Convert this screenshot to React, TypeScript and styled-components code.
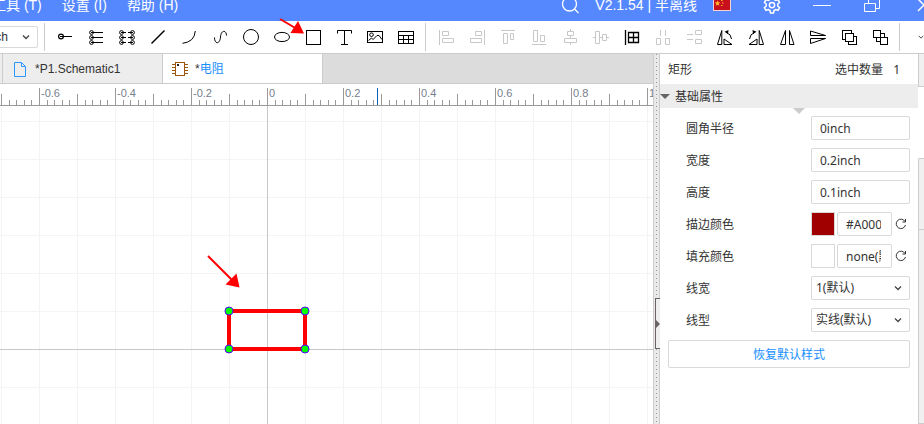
import React from "react";
import styled, { createGlobalStyle, css } from "styled-components";

const GlobalStyle = createGlobalStyle`
  *, *::before, *::after { box-sizing: border-box; }
  body {
    margin: 0;
    background: #fff;
    color: #333;
    font: 12px/16px "Liberation Sans", "Noto Sans CJK SC", sans-serif;
  }
  button, input, select { font: inherit; color: inherit; margin: 0; }
`;

const Page = styled.div`
  position: relative;
  display: flex;
  flex-direction: column;
  height: 100vh;
  overflow: hidden;
`;

/* ---------- title bar ---------- */
const TitleBar = styled.header`
  display: flex;
  align-items: flex-end;
  flex: none;
  height: 21px;
  overflow: hidden;
  background: #5588ff;
  color: #fff;
  font-size: 14px;
`;
const TitleGroup = styled.div<{ $gap: number; $push?: boolean }>`
  display: flex;
  align-items: center;
  gap: ${(p) => p.$gap}px;
  height: 32px;
  white-space: nowrap;
  ${(p) => p.$push && css`margin-left: auto; margin-right: -11px;`}
`;
const MenuNav = styled(TitleGroup).attrs({ as: "nav" })`
  margin-left: -8px;
`;
const MenuButton = styled.button`
  border: 0;
  padding: 0;
  background: none;
`;
const WindowButton = styled.button<{ $w: number }>`
  display: flex;
  justify-content: center;
  width: ${(p) => p.$w}px;
  border: 0;
  padding: 0;
  background: none;
`;

/* ---------- toolbar ---------- */
const Toolbar = styled.div`
  display: flex;
  align-items: center;
  flex: none;
  height: 33px;
  border-bottom: 1px solid #ccc;
  background: #fff;
  overflow: hidden;
`;
const Separator = styled.span<{ $before: number; $after: number }>`
  flex: none;
  width: 1px;
  height: 28px;
  margin: 0 ${(p) => p.$after}px 0 ${(p) => p.$before}px;
  background: #ccc;
`;
const ToolButton = styled.button`
  flex: none;
  display: flex;
  width: 31px;
  height: 24px;
  border: 0;
  padding: 0;
  background: none;
  color: #000;
  &:disabled { color: #c8c8c8; }
`;
const SelectBox = styled.span<{ $w: number; $h: number; $shift?: number }>`
  position: relative;
  display: flex;
  flex: none;
  width: ${(p) => p.$w}px;
  height: ${(p) => p.$h}px;
  margin-left: ${(p) => p.$shift ?? 0}px;
  svg {
    position: absolute;
    right: 8px;
    top: 50%;
    margin-top: -4px;
    pointer-events: none;
  }
`;
const Select = styled.select<{ $pad: number }>`
  appearance: none;
  width: 100%;
  border: 1px solid #d9d9d9;
  border-radius: 2px;
  padding: 0 20px 0 ${(p) => p.$pad}px;
  background: #fff;
`;

/* ---------- workspace ---------- */
const Workspace = styled.div`
  display: flex;
  flex: 1;
  min-height: 0;
`;
const Editor = styled.main`
  display: flex;
  flex-direction: column;
  flex: 1;
  min-width: 0;
  border-right: 1px solid #ccc;
`;
const Tabs = styled.div`
  display: flex;
  flex: none;
  height: 30px;
  border-bottom: 1px solid #ccc;
  background: #dcdcdc;
`;
const TabEdge = styled.span`
  width: 3px;
  border-right: 1px solid #ccc;
  background: #ededed;
`;
const Tab = styled.button<{ $active?: boolean }>`
  display: flex;
  align-items: center;
  gap: 6px;
  width: 160px;
  border: 0;
  border-right: 1px solid #ccc;
  padding: 0 0 0 8px;
  background: ${(p) => (p.$active ? "#fff" : "#ededed")};
  white-space: nowrap;
`;
const TabName = styled.span<{ $accent?: boolean }>`
  color: ${(p) => (p.$accent ? "#1890ff" : "inherit")};
`;
const Ruler = styled.svg`
  display: block;
  flex: none;
  width: 100%;
  height: 22px;
  font: 11px "Liberation Sans", sans-serif;
`;
const Canvas = styled.svg`
  display: block;
  flex: 1;
  width: 100%;
  min-height: 0;
`;

const Splitter = styled.div`
  display: flex;
  flex-direction: column;
  align-items: center;
  flex: none;
  width: 6px;
  border-right: 1px solid #ccc;
  background: #e9e9e9;
`;
const Grip = styled.span<{ $grow: number }>`
  flex: ${(p) => p.$grow};
  width: 1px;
  background: repeating-linear-gradient(#999 0 1px, #e9e9e9 1px 4px);
`;
const CollapseButton = styled.button`
  display: flex;
  align-items: center;
  align-self: stretch;
  height: 51px;
  margin-left: 1px;
  margin-right: -1px;
  border: 1px solid #6b6363;
  border-right: 0;
  padding: 0;
  background: #eee;
`;

/* ---------- properties panel ---------- */
const Panel = styled.aside`
  flex: none;
  width: 258px;
  font-family: "Noto Sans", "Noto Sans CJK SC", sans-serif;
`;
const PanelHeader = styled.div`
  display: flex;
  align-items: center;
  gap: 10px;
  height: 30px;
  padding: 2px 18px 0 8px;
`;
const PanelTitle = styled.span`
  flex: 1;
`;
const SectionTitle = styled.button`
  display: flex;
  align-items: center;
  gap: 5px;
  width: 100%;
  height: 24px;
  border: 0;
  padding: 1px 0 0;
  background: #ededed;
`;
const Properties = styled.div`
  position: relative;
  padding: 4px 8px 0 26px;
  > svg {
    position: absolute;
    top: 0;
    right: 113px;
  }
`;
const Property = styled.div`
  display: flex;
  align-items: center;
  height: 32px;
`;
const Label = styled.label`
  flex: 1;
  padding-top: 2px;
`;
const Field = styled.div`
  display: flex;
  align-items: center;
  gap: 2px;
  width: 99px;
  height: 24px;
`;
const TextInput = styled.input`
  flex: 1;
  min-width: 0;
  height: 24px;
  border: 1px solid #d9d9d9;
  border-radius: 2px;
  padding: 0 10px 0 8px;
  background: #fff;
`;
const Swatch = styled.button<{ $color: string }>`
  flex: none;
  width: 24px;
  height: 24px;
  border: 1px solid #d9d9d9;
  padding: 0;
  background: ${(p) => p.$color};
`;
const ResetButton = styled.button`
  flex: none;
  display: flex;
  justify-content: center;
  width: 16px;
  border: 0;
  padding: 0 2px 0 0;
  background: none;
`;
const RestoreButton = styled.button`
  display: block;
  width: calc(100% - 16px);
  height: 28px;
  margin: 4px 8px;
  border: 1px solid #d9d9d9;
  border-radius: 2px;
  padding: 2px 0 0;
  background: #fff;
  color: #1890ff;
`;
const SideTabs = styled.div`
  flex: none;
  display: flex;
  flex-direction: column;
  width: 6px;
`;
const SideTab = styled.button<{ $h?: number; $active?: boolean }>`
  flex: ${(p) => (p.$h ? "none" : "1")};
  height: ${(p) => (p.$h ? `${p.$h}px` : "auto")};
  border: 0;
  border-left: 1px solid ${(p) => (p.$active ? "#fff" : "#ccc")};
  border-bottom: 1px solid #ccc;
  padding: 0;
  background: ${(p) => (p.$active ? "#fff" : "#f0f0f0")};
`;
const Pointer = styled.svg`
  position: absolute;
  left: 278px;
  top: 16px;
  pointer-events: none;
`;

/* ---------- icons ---------- */
const Chevron = () => (
  <svg width="8" height="8" viewBox="0 0 8 8" fill="none" stroke="#444" strokeWidth="1.3">
    <path d="M1 2.5l3 3 3-3" />
  </svg>
);

type Tool = { name: string; off?: boolean; icon: React.ReactNode };

const drawTools: Tool[] = [
  { name: "Pin", icon: <><circle cx="11" cy="11.5" r="2.4" strokeWidth="1.2" /><path d="M10 11.5H22" /></> },
  {
    name: "Pin group",
    icon: (
      <>
        {[7.5, 12.5, 17.5].map((y) => <circle key={y} cx="10.5" cy={y} r="1.9" />)}
        <path d="M10 7.5H22M10 12.5H22M10 17.5H22" />
      </>
    ),
  },
  {
    name: "Pin array",
    icon: (
      <>
        {[7.5, 12.5, 17.5].map((y) => (
          <g key={y}>
            <circle cx="9.5" cy={y} r="1.9" />
            <circle cx="20.5" cy={y} r="1.9" />
          </g>
        ))}
        <path d="M9 7.5h5M16 7.5h5M9 12.5h5M16 12.5h5M9 17.5h5M16 17.5h5" />
      </>
    ),
  },
  { name: "Line", icon: <path d="M8.5 18.5L21.5 5.5" strokeWidth="1.5" /> },
  { name: "Arc", icon: <path d="M8.5 18.3Q20.5 17 21.3 6" /> },
  { name: "Bezier", icon: <path d="M9.5 12.5C9.5 19.5 15 19.5 15.5 12C16 4.5 21.5 5 21.5 10.5" /> },
  { name: "Circle", icon: <circle cx="15" cy="12" r="7.5" /> },
  { name: "Ellipse", icon: <ellipse cx="15" cy="12" rx="7.5" ry="4.6" /> },
  { name: "Rectangle", icon: <rect x="8.5" y="5.5" width="14" height="14" /> },
  { name: "Text", icon: <path d="M8.5 8.5V5.5H22.5V8.5M15.5 5.5V19M12 19.5h7" /> },
  {
    name: "Image",
    icon: (
      <>
        <rect x="7.5" y="6.5" width="15" height="11" />
        <circle cx="11.5" cy="9.7" r="1.8" />
        <path d="M8.5 15.5l3-2.500 1.500 1.500 4-4 2 0 3 4" />
      </>
    ),
  },
  {
    name: "Table",
    icon: (
      <>
        <rect x="7.5" y="6.5" width="15" height="12" />
        <path d="M7.5 10.5h15M7.5 14.5h15M12.5 10v8.5M17.5 10v8.5" />
      </>
    ),
  },
];

const rotateLeft = (
  <>
    <path d="M7.5 19.5L11.8 5.5V19.5Z" />
    <path d="M14 19.5V14L22 19.5Z" />
    <path d="M21.5 14Q21 9 16.5 7.5" />
    <path d="M14.5 6.8L18.5 5L18 9Z" fill="currentColor" stroke="none" />
  </>
);

const arrangeTools: Tool[] = [
  { name: "Align left", off: true, icon: <path d="M8.5 5v15M11.5 6.5h6v4h-6zM11.5 13.5h11v4h-11z" /> },
  { name: "Align right", off: true, icon: <path d="M22.5 5v15M13.5 6.5h6v4h-6zM8.5 13.5h11v4h-11z" /> },
  { name: "Align top", off: true, icon: <path d="M8 5.5h14M10.5 8.5h4v10h-4zM17.5 8.5h3v6h-3z" /> },
  { name: "Align bottom", off: true, icon: <path d="M8 19.5h14M9.5 5.5h4v11h-4zM16.5 10.5h4v6h-4z" /> },
  { name: "Center horizontally", off: true, icon: <path d="M15.5 4v2.5M12.5 6.5h6v4h-6zM15.5 10.5v3M9.5 13.5h12v4h-12zM15.5 17.5v2.5" /> },
  { name: "Center vertically", off: true, icon: <path d="M7 12.5h2.5M9.5 6.5h4v12h-4zM13.5 12.5h3M16.5 9.5h4v6h-4zM20.5 12.5h2.5" /> },
  {
    name: "Snap to grid",
    icon: <path d="M8.5 5v15M11.5 7.5h10v10h-10zM11.5 12.5h10M16.5 7.5v10" strokeWidth="1.3" />,
  },
  { name: "Distribute horizontally", off: true, icon: <path d="M12.5 5v6M17.5 5v6M8.5 13.5h4v6h-4zM17.5 13.5h4v6h-4z" /> },
  { name: "Distribute vertically", off: true, icon: <path d="M8 9.5h6M8 14.5h6M16.5 5.5h6v4h-6zM16.5 14.5h6v4h-6z" /> },
  { name: "Rotate left", icon: rotateLeft },
  { name: "Rotate right", icon: <g transform="translate(30 0) scale(-1 1)">{rotateLeft}</g> },
  { name: "Flip horizontally", icon: <path d="M8.5 19.5L13.5 5.5V19.5ZM22 19.5L17.5 5.5V19.5Z" /> },
  { name: "Flip vertically", icon: <path d="M7.5 6L22.5 10.5H7.5ZM7.5 18.5L22.5 13.5H7.5Z" /> },
  {
    name: "Bring to front",
    icon: (
      <g fill="#fff">
        <rect x="8.5" y="5.5" width="9" height="9" />
        <rect x="14.5" y="11.5" width="8" height="8" />
        <rect x="11.5" y="8.5" width="8" height="8" />
      </g>
    ),
  },
  {
    name: "Send to back",
    icon: (
      <g fill="#fff">
        <rect x="11.5" y="8.5" width="8" height="8" />
        <rect x="8.5" y="5.5" width="7" height="7" />
        <rect x="15.5" y="12.5" width="7" height="7" />
      </g>
    ),
  },
];

const ToolGroup = ({ tools }: { tools: Tool[] }) => (
  <>
    {tools.map((t) => (
      <ToolButton key={t.name} aria-label={t.name} disabled={t.off}>
        <svg width="31" height="24" viewBox="0 0 31 24" fill="none" stroke="currentColor">
          {t.icon}
        </svg>
      </ToolButton>
    ))}
  </>
);

const ResetIcon = () => (
  <svg width="12" height="12" viewBox="0 0 12 12" fill="none" stroke="#333">
    <path d="M10 3.5A4.7 4.7 0 1 0 10.5 7M10.5 1v3h-3" />
  </svg>
);

/* ---------- drawing area ---------- */
const ORIGIN_X = 267;
const UNIT = 38;
const ORIGIN_Y = 243;
const ticks = Array.from({ length: 86 }, (_, i) => i - 35);
const columns = Array.from({ length: 60 }, (_, i) => i - 7).filter((i) => i !== 0);
const rows = Array.from({ length: 30 }, (_, i) => i - 6).filter((i) => i !== 0);
const corners = [[229, 205], [305, 205], [229, 243], [305, 243]];

const RulerScale = () => (
  <Ruler>
    <g stroke="#999" shapeRendering="crispEdges">
      {ticks.map((i) => {
        const x = Math.round(ORIGIN_X + (i * UNIT) / 5) + 0.5;
        const top = i % 10 === 0 ? 4 : i % 5 === 0 ? 10 : 16;
        return <line key={i} x1={x} x2={x} y1={top} y2={21} />;
      })}
      <line x1="0" x2="100%" y1="21.5" y2="21.5" />
    </g>
    <line x1="377.5" x2="377.5" y1="4" y2="21" stroke="#0b62b8" />
    <g fill="#76808c">
      {[-3, -2, -1, 0, 1, 2, 3, 4, 5].map((i) => (
        <text key={i} x={ORIGIN_X + 2 + i * UNIT * 2} y="13">
          {i === 0 ? "0" : i === 5 ? "1" : (i * 0.2).toFixed(1)}
        </text>
      ))}
    </g>
  </Ruler>
);

const Drawing = () => (
  <Canvas>
    <g stroke="#f4f4f4" shapeRendering="crispEdges">
      {columns.map((i) => {
        const x = ORIGIN_X + i * UNIT + 0.5;
        return <line key={i} x1={x} x2={x} y1="0" y2="100%" />;
      })}
      {rows.map((i) => {
        const y = ORIGIN_Y + i * UNIT + 0.5;
        return <line key={i} x1="0" x2="100%" y1={y} y2={y} />;
      })}
    </g>
    <g stroke="#c8c8c8" shapeRendering="crispEdges">
      <line x1="267.5" x2="267.5" y1="0" y2="100%" />
      <line x1="0" x2="100%" y1="243.5" y2="243.5" />
    </g>
    <rect x="229" y="205" width="76" height="38" fill="none" stroke="#f00" strokeWidth="4" />
    {corners.map(([x, y]) => (
      <circle key={`${x}-${y}`} cx={x} cy={y} r="4" fill="#0f0" stroke="#50f" />
    ))}
    <path d="M208 150L233 175" stroke="#f00" strokeWidth="2" />
    <path d="M239.5 181.5L225.5 178.5L236.5 167.5Z" fill="#f00" />
  </Canvas>
);

export default function App() {
  return (
    <Page>
      <GlobalStyle />
      <TitleBar>
        <MenuNav $gap={20}>
          <MenuButton>工具 (T)</MenuButton>
          <MenuButton>设置 (I)</MenuButton>
          <MenuButton>帮助 (H)</MenuButton>
        </MenuNav>
        <TitleGroup $gap={16} $push>
          <WindowButton $w={18} aria-label="Search">
            <svg width="18" height="18" viewBox="0 0 18 18" fill="none" stroke="#fff" strokeWidth="1.3">
              <circle cx="8.5" cy="8" r="7" />
              <path d="M13.5 13l4 4" />
            </svg>
          </WindowButton>
          <span>V2.1.54 | 半离线</span>
          <WindowButton $w={18} aria-label="Language">
            <svg width="18" height="12" viewBox="0 0 18 12">
              <rect x="0.5" y="0.5" width="17" height="11" fill="#c8101c" stroke="#f3d3d8" />
              <path d="M4.5 1.5l.8 1.8 2 .2-1.5 1.3.5 2-1.800-1-1.800 1 .5-2L1.700 3.500l2-.2z" fill="#ffb42a" />
              <path d="M8 1h1.500v1H8zM9 3.500h1.500v1H9zM8 6h1.500v1H8z" fill="#ffb42a" />
            </svg>
          </WindowButton>
          <WindowButton $w={50} aria-label="Settings">
            <svg width="18" height="18" viewBox="0 0 24 24" fill="none" stroke="#fff" strokeWidth="2">
              <path d="M10 1.5h4l.7 3.2 2.3 1.3 3.1-1 2 3.5L19.700 10.700v2.600l2.400 2.200-2 3.500-3.100-1-2.300 1.300L14 22.500h-4l-.7-3.200L7 18l-3.100 1-2-3.500 2.400-2.200v-2.600L1.900 8.500l2-3.500L7 6l2.300-1.300z" />
              <circle cx="12" cy="12" r="3.5" />
            </svg>
          </WindowButton>
          <WindowButton $w={18} aria-label="Minimize">
            <svg width="18" height="12" viewBox="0 0 18 12" stroke="#fff">
              <path d="M0 6.5h18" />
            </svg>
          </WindowButton>
          <WindowButton $w={50} aria-label="Restore">
            <svg width="16" height="16" viewBox="0 0 16 16" fill="none" stroke="#fff">
              <path d="M.5 6.500h11v8H.5zM4.500 6.500v-4h11v9h-4" />
            </svg>
          </WindowButton>
          <WindowButton $w={22} aria-label="Close">
            <svg width="14" height="14" viewBox="0 0 14 14" stroke="#fff" strokeWidth="1.5">
              <path d="M1 1l12 12M13 1L1 13" />
            </svg>
          </WindowButton>
        </TitleGroup>
      </TitleBar>

      <Toolbar>
        <SelectBox $w={68} $h={22} $shift={-30}>
          <Select $pad={15} aria-label="Unit" defaultValue="inch">
            <option>inch</option>
            <option>mm</option>
          </Select>
          <Chevron />
        </SelectBox>
        <Separator $before={6} $after={5} />
        <ToolGroup tools={drawTools} />
        <Separator $before={3} $after={5} />
        <ToolGroup tools={arrangeTools} />
        <Separator $before={3} $after={18} />
        <Chevron />
      </Toolbar>

      <Workspace>
        <Editor>
          <Tabs role="tablist">
            <TabEdge />
            <Tab role="tab">
              <svg width="18" height="18" viewBox="0 0 18 18" fill="none" stroke="#2e96ff">
                <path d="M3.5 2.5h7l4 4v10h-11zM10.5 2.5v4h4" />
              </svg>
              <TabName>*P1.Schematic1</TabName>
            </Tab>
            <Tab $active role="tab" aria-selected>
              <svg width="18" height="18" viewBox="0 0 18 18" fill="none" stroke="#a0560b">
                <rect x="4.5" y="2.5" width="9" height="13" />
                <path d="M1 4.5h3M1 7.5h3M1 10.5h3M1 13.5h3M14 4.5h3M14 7.5h3M14 10.5h3M14 13.5h3" />
                <path d="M6 5h2" stroke="#222" strokeWidth="2" />
              </svg>
              <span>
                <TabName>*</TabName>
                <TabName $accent>电阻</TabName>
              </span>
            </Tab>
          </Tabs>
          <RulerScale />
          <Drawing />
        </Editor>

        <Splitter>
          <Grip $grow={244} />
          <CollapseButton aria-label="Collapse panel">
            <svg width="4" height="8" viewBox="0 0 4 8" fill="#6b6363">
              <path d="M0 0l4 4-4 4z" />
            </svg>
          </CollapseButton>
          <Grip $grow={75} />
        </Splitter>

        <Panel>
          <PanelHeader>
            <PanelTitle>矩形</PanelTitle>
            <span>选中数量</span>
            <span>1</span>
          </PanelHeader>
          <SectionTitle>
            <svg width="10" height="6" viewBox="0 0 10 6" fill="#666">
              <path d="M0 0h10L5 5z" />
            </svg>
            基础属性
          </SectionTitle>
          <Properties>
            <svg width="12" height="6" viewBox="0 0 12 6" fill="#ccc">
              <path d="M0 0h12L6 6z" />
            </svg>
            <Property>
              <Label htmlFor="radius">圆角半径</Label>
              <Field><TextInput id="radius" defaultValue="0inch" /></Field>
            </Property>
            <Property>
              <Label htmlFor="width">宽度</Label>
              <Field><TextInput id="width" defaultValue="0.2inch" /></Field>
            </Property>
            <Property>
              <Label htmlFor="height">高度</Label>
              <Field><TextInput id="height" defaultValue="0.1inch" /></Field>
            </Property>
            <Property>
              <Label htmlFor="stroke">描边颜色</Label>
              <Field>
                <Swatch $color="#a00000" aria-label="Stroke swatch" />
                <TextInput id="stroke" defaultValue="#A00000" />
                <ResetButton aria-label="Reset stroke"><ResetIcon /></ResetButton>
              </Field>
            </Property>
            <Property>
              <Label htmlFor="fill">填充颜色</Label>
              <Field>
                <Swatch $color="#fff" aria-label="Fill swatch" />
                <TextInput id="fill" defaultValue="none(默认)" />
                <ResetButton aria-label="Reset fill"><ResetIcon /></ResetButton>
              </Field>
            </Property>
            <Property>
              <Label htmlFor="line-width">线宽</Label>
              <SelectBox $w={99} $h={24}>
                <Select id="line-width" $pad={4}><option>1(默认)</option></Select>
                <Chevron />
              </SelectBox>
            </Property>
            <Property>
              <Label htmlFor="line-style">线型</Label>
              <SelectBox $w={99} $h={24}>
                <Select id="line-style" $pad={4}><option>实线(默认)</option></Select>
                <Chevron />
              </SelectBox>
            </Property>
          </Properties>
          <RestoreButton>恢复默认样式</RestoreButton>
        </Panel>

        <SideTabs>
          <SideTab $h={33} aria-label="Library" />
          <SideTab $h={72} $active aria-label="Properties" />
          <SideTab $h={71} aria-label="Layers" />
          <SideTab aria-label="Filter" />
        </SideTabs>
      </Workspace>

      <Pointer width="28" height="20" viewBox="0 0 28 20">
        <path d="M2 3L19 13" stroke="#f00" strokeWidth="2" />
        <path d="M26 17.5L12.5 17L20 5Z" fill="#f00" />
      </Pointer>
    </Page>
  );
}
